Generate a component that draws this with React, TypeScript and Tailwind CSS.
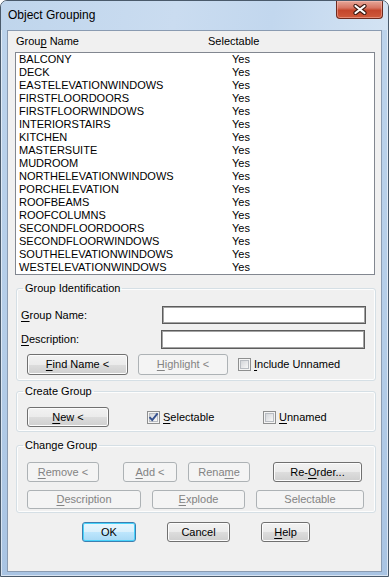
import React from "react";

const groups = [
  "BALCONY",
  "DECK",
  "EASTELEVATIONWINDOWS",
  "FIRSTFLOORDOORS",
  "FIRSTFLOORWINDOWS",
  "INTERIORSTAIRS",
  "KITCHEN",
  "MASTERSUITE",
  "MUDROOM",
  "NORTHELEVATIONWINDOWS",
  "PORCHELEVATION",
  "ROOFBEAMS",
  "ROOFCOLUMNS",
  "SECONDFLOORDOORS",
  "SECONDFLOORWINDOWS",
  "SOUTHELEVATIONWINDOWS",
  "WESTELEVATIONWINDOWS",
];

// text with a mnemonic letter underlined, like win32 "&Name"
function Lbl({ t, u }: { t: string; u?: number }) {
  if (u === undefined) return <>{t}</>;
  return (
    <>
      {t.slice(0, u)}
      <span className="underline underline-offset-[2px]">{t[u]}</span>
      {t.slice(u + 1)}
    </>
  );
}

function Btn({
  t,
  u,
  className,
  disabled,
  def,
}: {
  t: string;
  u?: number;
  className: string;
  disabled?: boolean;
  def?: boolean;
}) {
  let look =
    "border-[#707070] text-black bg-[linear-gradient(to_bottom,#f2f2f2_0%,#ebebeb_50%,#dddddd_50%,#cfcfcf_100%)] shadow-[inset_0_0_0_1px_#fcfcfc]";
  if (disabled) look = "border-[#adb2b5] text-[#838383] bg-[#f4f4f4]";
  if (def)
    look =
      "border-[#3c7fb1] text-black bg-[linear-gradient(to_bottom,#eaf6fd_0%,#d9f0fc_50%,#bee6fd_50%,#a7d9f5_100%)] shadow-[inset_0_0_0_1px_#48d3fb]";
  return (
    <div
      className={`flex shrink-0 items-center justify-center rounded-[3px] border text-[11px] leading-[13px] ${look} ${className}`}
    >
      <span>
        <Lbl t={t} u={u} />
      </span>
    </div>
  );
}

function Check({ t, u, checked }: { t: string; u?: number; checked?: boolean }) {
  return (
    <div className="flex items-center gap-[3px] text-[11px] leading-[13px]">
      <span className="flex h-[13px] w-[13px] shrink-0 items-center justify-center border border-[#8e8f8f] bg-[#f4f4f4]">
        <span className="flex h-[9px] w-[9px] items-center justify-center border border-[#b8bcc2] bg-[linear-gradient(135deg,#d4d6da,#f7f7f7)]">
          {checked && (
            <svg width="11" height="11" viewBox="0 0 11 11" className="overflow-visible">
              <path d="M1.5 5.2 L4.2 8 L9.6 1.4" fill="none" stroke="#34508e" strokeWidth="1.9" />
            </svg>
          )}
        </span>
      </span>
      <span>
        <Lbl t={t} u={u} />
      </span>
    </div>
  );
}

function Group({ title, children, className }: { title: string; children: React.ReactNode; className: string }) {
  return (
    <fieldset
      className={`ml-[8px] w-[360px] rounded-[3px] border border-[#d5dfe5] shadow-[inset_0_0_0_1px_#fdfdfd] ${className}`}
    >
      <legend className="ml-[6px] px-[2px] text-[11px] leading-[13px] text-black">{title}</legend>
      {children}
    </fieldset>
  );
}

export default function App() {
  return (
    <div className="h-[577px] w-[389px] overflow-hidden rounded-t-[7px] border border-[#4a5a6b] bg-[linear-gradient(to_bottom,#bdd4ec,#b4cde8_60%,#a9c4e3)] font-['Liberation_Sans',Arial,sans-serif] shadow-[inset_0_0_0_1px_rgba(255,255,255,0.55)]">
      {/* title bar */}
      <div className="flex h-[29px] items-start justify-between bg-[linear-gradient(100deg,#bfd5ec_0%,#cadcf0_45%,#c2d7ee_70%,#d3e3f3_100%)]">
        <span className="pl-[7px] pt-[7px] text-[12px] leading-[15px] text-black">Object Grouping</span>
        <div className="mr-[5px] flex h-[18px] w-[47px] items-center justify-center rounded-b-[4px] border border-t-0 border-[#6d2a1e] bg-[linear-gradient(to_bottom,#e6a799_0%,#d77563_40%,#c4462c_55%,#cf5a3b_100%)] shadow-[inset_0_0_0_1px_rgba(255,200,190,0.45)]">
          <svg width="14" height="11" viewBox="0 0 14 11">
            <path d="M2.5 2 L11.5 9 M11.5 2 L2.5 9" stroke="#3d1a12" strokeWidth="4.2" strokeLinecap="round" />
            <path d="M2.5 2 L11.5 9 M11.5 2 L2.5 9" stroke="#ffffff" strokeWidth="2.2" strokeLinecap="round" />
          </svg>
        </div>
      </div>

      {/* client area */}
      <div className="mx-[6px] h-[542px] border border-[#8a9bb1] bg-[#f0f0f0] text-[11px] leading-[13px] text-black">
        <div className="flex h-[21px] pl-[8px] pt-[4px]">
          <span className="w-[192px]">
            <Lbl t="Group Name" u={4} />
          </span>
          <span>Selectable</span>
        </div>

        <div className="ml-[7px] h-[223px] w-[360px] border border-[#828790] bg-white">
          {groups.map((g) => (
            <div key={g} className="flex h-[13px] pl-[3px]">
              <span className="w-[213px]">{g}</span>
              <span>Yes</span>
            </div>
          ))}
        </div>

        <Group title="Group Identification" className="mt-[7px] pb-[5px]">
          <div className="mt-[11px] flex h-[18px] items-center">
            <span className="w-[145px] pl-[4px]">
              <Lbl t="Group Name:" u={0} />
            </span>
            <div className="h-[18px] w-[204px] border border-[#5c5c5c] bg-white shadow-[inset_0_0_0_1px_#a3a3a3]" />
          </div>
          <div className="mt-[6px] flex h-[19px] items-center">
            <span className="w-[144px] pl-[4px]">
              <Lbl t="Description:" u={0} />
            </span>
            <div className="h-[19px] w-[204px] border border-[#5c5c5c] bg-white shadow-[inset_0_0_0_1px_#a3a3a3]" />
          </div>
          <div className="mt-[5px] flex items-center pl-[10px]">
            <Btn t="Find Name <" u={0} className="h-[21px] w-[101px]" />
            <Btn t="Highlight <" u={0} disabled className="ml-[10px] h-[21px] w-[90px]" />
            <div className="ml-[10px]">
              <Check t="Include Unnamed" u={0} />
            </div>
          </div>
        </Group>

        <Group title="Create Group" className="mt-[4px] pb-[4px]">
          <div className="mt-[9px] flex items-center pl-[10px]">
            <Btn t="New <" u={0} className="h-[20px] w-[82px]" />
            <div className="ml-[38px] w-[116px]">
              <Check t="Selectable" u={0} checked />
            </div>
            <Check t="Unnamed" u={0} />
          </div>
        </Group>

        <Group title="Change Group" className="mt-[7px] pb-[3px]">
          <div className="mt-[10px] flex pl-[10px]">
            <Btn t="Remove <" u={0} disabled className="h-[20px] w-[72px]" />
            <Btn t="Add <" u={0} disabled className="ml-[24px] h-[20px] w-[54px]" />
            <Btn t="Rename" u={4} disabled className="ml-[11px] h-[20px] w-[62px]" />
            <Btn t="Re-Order..." u={3} className="ml-[23px] h-[20px] w-[89px]" />
          </div>
          <div className="mt-[8px] flex pl-[10px]">
            <Btn t="Description" u={0} disabled className="h-[19px] w-[114px]" />
            <Btn t="Explode" u={0} disabled className="ml-[11px] h-[19px] w-[93px]" />
            <Btn t="Selectable" disabled className="ml-[11px] h-[19px] w-[108px]" />
          </div>
        </Group>

        <div className="mt-[9px] flex pl-[74px]">
          <Btn t="OK" def className="h-[20px] w-[54px]" />
          <Btn t="Cancel" className="ml-[31px] h-[20px] w-[63px]" />
          <Btn t="Help" u={0} className="ml-[31px] h-[20px] w-[49px]" />
        </div>
      </div>
    </div>
  );
}
